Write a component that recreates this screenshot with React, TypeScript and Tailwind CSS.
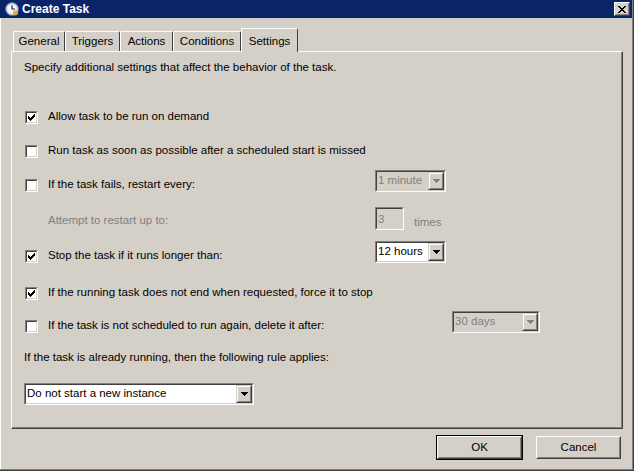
import React from "react";

function Check({ checked }: { checked?: boolean }) {
  return (
    <div className="w-[13px] h-[13px] shrink-0 border border-t-[#808080] border-l-[#808080] border-b-white border-r-white">
      <div className="w-full h-full bg-white border border-t-[#404040] border-l-[#404040] border-b-[#d4d0c8] border-r-[#d4d0c8] flex items-center justify-center">
        {checked && (
          <svg width="7" height="7" viewBox="0 0 7 7" shapeRendering="crispEdges">
            <rect x="6" y="0" width="1" height="1" fill="#000" />
            <rect x="5" y="1" width="2" height="1" fill="#000" />
            <rect x="0" y="2" width="1" height="1" fill="#000" />
            <rect x="4" y="2" width="3" height="1" fill="#000" />
            <rect x="0" y="3" width="2" height="1" fill="#000" />
            <rect x="3" y="3" width="3" height="1" fill="#000" />
            <rect x="0" y="4" width="5" height="1" fill="#000" />
            <rect x="1" y="5" width="3" height="1" fill="#000" />
            <rect x="2" y="6" width="1" height="1" fill="#000" />
          </svg>
        )}
      </div>
    </div>
  );
}

function Combo({ value, disabled, className }: { value: string; disabled?: boolean; className: string }) {
  return (
    <div className={`flex h-[22px] shrink-0 border border-t-[#808080] border-l-[#808080] border-b-white border-r-white ${className}`}>
      <div
        className={`flex flex-1 border border-t-[#404040] border-l-[#404040] border-b-[#d4d0c8] border-r-[#d4d0c8] ${
          disabled ? "bg-[#d4d0c8] text-[#808080]" : "bg-white text-black"
        }`}
      >
        <div className="flex-1 flex items-center pl-[1px] leading-none whitespace-nowrap">{value}</div>
        <div className="w-[16px] h-full border border-t-[#d4d0c8] border-l-[#d4d0c8] border-b-[#404040] border-r-[#404040] bg-[#d4d0c8]">
          <div className="w-full h-full border border-t-white border-l-white border-b-[#808080] border-r-[#808080] flex items-center justify-center">
            <svg width="7" height="4" viewBox="0 0 7 4" shapeRendering="crispEdges">
              <path d="M0 0H7V1H6V2H5V3H4V4H3V3H2V2H1V1H0Z" fill={disabled ? "#808080" : "#000"} />
            </svg>
          </div>
        </div>
      </div>
    </div>
  );
}

function Button({ label, isDefault }: { label: string; isDefault?: boolean }) {
  return (
    <div className={`w-[87px] h-[25px] border ${isDefault ? "border-black" : "border-transparent"}`}>
      <div className="w-full h-full border border-t-white border-l-white border-b-[#404040] border-r-[#404040]">
        <div className="w-full h-full border border-t-[#d4d0c8] border-l-[#d4d0c8] border-b-[#808080] border-r-[#808080] flex items-center justify-center">
          {label}
        </div>
      </div>
    </div>
  );
}

function ClockIcon() {
  return (
    <svg width="14" height="14" viewBox="0 0 14 14">
      <circle cx="7" cy="7" r="6.3" fill="#c9d3e6" stroke="#7b8bab" strokeWidth="1" />
      <circle cx="7" cy="7" r="4.8" fill="#f4f6fa" />
      <path d="M7 3.2V7H10" stroke="#1b2540" strokeWidth="1.2" fill="none" />
      <circle cx="10.5" cy="10.8" r="2.6" fill="#e0a93c" opacity="0.9" />
    </svg>
  );
}

export default function App() {
  const tabs = [
    { name: "General", w: "w-[52px]" },
    { name: "Triggers", w: "w-[55px]" },
    { name: "Actions", w: "w-[53px]" },
    { name: "Conditions", w: "w-[68px]" },
  ];

  return (
    <div className="w-[634px] h-[471px] bg-[#d4d0c8] font-['Liberation_Sans',Arial,sans-serif] text-[11.5px] text-black border-r border-b border-r-[#404040] border-b-[#404040] overflow-hidden">
      <div className="flex flex-col h-full border-r border-b border-r-[#808080] border-b-[#808080]">
        {/* Title bar */}
        <div className="h-[18px] shrink-0 bg-[#0a246a] flex items-center justify-between pl-[5px] pr-[2px]">
          <div className="flex items-center gap-[3px]">
            <ClockIcon />
            <span className="text-white font-bold text-[12px] leading-none">Create Task</span>
          </div>
          <div className="w-[16px] h-[14px] border border-t-white border-l-white border-b-[#404040] border-r-[#404040] bg-[#d4d0c8]">
            <div className="w-full h-full border border-t-[#d4d0c8] border-l-[#d4d0c8] border-b-[#808080] border-r-[#808080] flex items-center justify-center">
              <svg width="8" height="7" viewBox="0 0 8 7" shapeRendering="crispEdges">
                <path
                  d="M0 0H2V1H3V2H5V1H6V0H8V1H7V2H6V3H5V4H6V5H7V6H8V7H6V6H5V5H3V6H2V7H0V6H1V5H2V4H3V3H2V2H1V1H0Z"
                  fill="#000"
                />
              </svg>
            </div>
          </div>
        </div>

        <div className="flex-1 flex flex-col border-l border-l-white">
          {/* Tabs */}
          <div className="relative z-10 flex items-end h-[24px] mt-[10px] pl-[12px]">
            {tabs.map((t) => (
              <div
                key={t.name}
                className={`${t.w} h-[20px] mb-[1px] rounded-t-[2px] border-t border-l border-r border-t-white border-l-white border-r-[#404040] flex items-center justify-center`}
              >
                {t.name}
              </div>
            ))}
            <div className="w-[57px] h-[24px] rounded-t-[2px] bg-[#d4d0c8] border-t border-l border-r border-t-white border-l-white border-r-[#404040] flex justify-center pt-[4px]">
              Settings
            </div>
          </div>

          {/* Panel */}
          <div className="-mt-[1px] ml-[10px] w-[612px] h-[378px] border border-t-white border-l-white border-r-[#404040] border-b-[#404040]">
            <div className="h-full flex flex-col pl-[12px] pt-[4px] border-r border-b border-r-[#808080] border-b-[#808080]">
              <div className="h-[24px] flex items-center">Specify additional settings that affect the behavior of the task.</div>

              <div className="h-[24px] mt-[25px] flex items-center">
                <div className="ml-[1px]"><Check checked /></div>
                <span className="ml-[10px]">Allow task to be run on demand</span>
              </div>

              <div className="h-[24px] mt-[10px] flex items-center">
                <div className="ml-[1px]"><Check /></div>
                <span className="ml-[10px]">Run task as soon as possible after a scheduled start is missed</span>
              </div>

              <div className="h-[24px] mt-[10px] flex items-center">
                <div className="w-[351px] flex items-center">
                  <div className="ml-[1px]"><Check /></div>
                  <span className="ml-[10px]">If the task fails, restart every:</span>
                </div>
                <Combo value="1 minute" disabled className="w-[71px] -mt-[8px]" />
              </div>

              <div className="h-[24px] mt-[12px] flex items-center">
                <div className="w-[351px] pl-[24px] text-[#808080]">Attempt to restart up to:</div>
                <div className="w-[29px] h-[23px] -mt-[6px] border border-t-[#808080] border-l-[#808080] border-b-white border-r-white">
                  <div className="w-full h-full border border-t-[#404040] border-l-[#404040] border-b-[#d4d0c8] border-r-[#d4d0c8] text-[#808080] pl-[1px] pt-[2px]">
                    3
                  </div>
                </div>
                <span className="ml-[10px] mt-[4px] text-[#808080]">times</span>
              </div>

              <div className="h-[24px] mt-[11px] flex items-center">
                <div className="w-[351px] flex items-center">
                  <div className="ml-[1px]"><Check checked /></div>
                  <span className="ml-[10px]">Stop the task if it runs longer than:</span>
                </div>
                <Combo value="12 hours" className="w-[71px] -mt-[8px]" />
              </div>

              <div className="h-[24px] mt-[13px] flex items-center">
                <div className="ml-[1px]"><Check checked /></div>
                <span className="ml-[10px]">If the running task does not end when requested, force it to stop</span>
              </div>

              <div className="h-[24px] mt-[9px] flex items-center">
                <div className="w-[428px] flex items-center">
                  <div className="ml-[1px]"><Check /></div>
                  <span className="ml-[10px]">If the task is not scheduled to run again, delete it after:</span>
                </div>
                <Combo value="30 days" disabled className="w-[88px] -mt-[8px]" />
              </div>

              <div className="h-[24px] mt-[8px] flex items-center">
                If the task is already running, then the following rule applies:
              </div>

              <div className="h-[24px] mt-[12px] flex items-center">
                <Combo value="Do not start a new instance" className="w-[230px]" />
              </div>
            </div>
          </div>

          {/* Buttons */}
          <div className="flex justify-end gap-[12px] mt-[6px] pr-[10px]">
            <Button label="OK" isDefault />
            <Button label="Cancel" />
          </div>
        </div>
      </div>
    </div>
  );
}
